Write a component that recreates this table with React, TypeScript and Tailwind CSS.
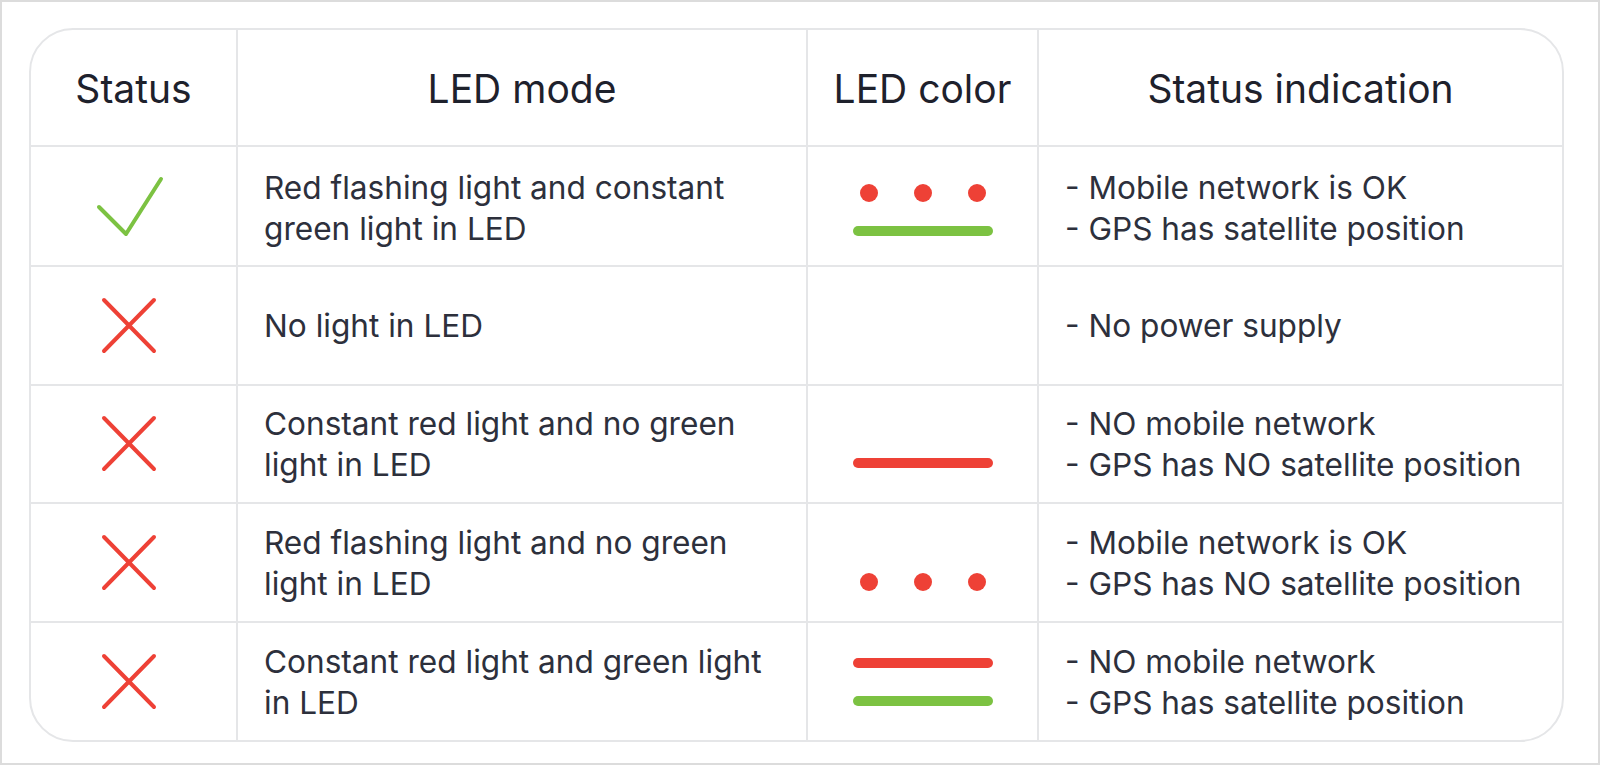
import React from "react";

const RED = "bg-[#ee4136]";
const GREEN = "bg-[#7cc242]";

function Check() {
  return (
    <svg width="80" height="64" viewBox="0 0 80 64" className="ml-[2px]">
      <polyline points="4,33 31,60 66,5" fill="none" stroke="#7cc242" strokeWidth="4" strokeLinecap="round" strokeLinejoin="round" />
    </svg>
  );
}

function Cross() {
  return (
    <svg width="64" height="60" viewBox="0 0 64 60" className="-ml-[3px]">
      <line x1="4" y1="4" x2="54" y2="55" stroke="#ee4136" strokeWidth="4" strokeLinecap="round" />
      <line x1="54" y1="4" x2="4" y2="55" stroke="#ee4136" strokeWidth="4" strokeLinecap="round" />
    </svg>
  );
}

function Dots() {
  return (
    <div className="flex gap-[36px]">
      <span className={`block w-[18px] h-[18px] rounded-full ${RED}`} />
      <span className={`block w-[18px] h-[18px] rounded-full ${RED}`} />
      <span className={`block w-[18px] h-[18px] rounded-full ${RED}`} />
    </div>
  );
}

function Bar({ color }: { color: "red" | "green" }) {
  return <span className={`block w-[140px] h-[10px] rounded-full ${color === "red" ? RED : GREEN}`} />;
}

type Slot = "dots" | "red" | "green" | null;

const rows: { ok: boolean; mode: string[]; top: Slot; bottom: Slot; empty?: boolean; shift?: boolean; status: string[] }[] = [
  { ok: true, mode: ["Red flashing light and constant", "green light in LED"], top: "dots", bottom: "green", shift: true, status: ["- Mobile network is OK", "- GPS has satellite position"] },
  { ok: false, mode: ["No light in LED"], top: null, bottom: null, empty: true, status: ["- No power supply"] },
  { ok: false, mode: ["Constant red light and no green", "light in LED"], top: null, bottom: "red", status: ["- NO mobile network", "- GPS has NO satellite position"] },
  { ok: false, mode: ["Red flashing light and no green", "light in LED"], top: null, bottom: "dots", status: ["- Mobile network is OK", "- GPS has NO satellite position"] },
  { ok: false, mode: ["Constant red light and green light", "in LED"], top: "red", bottom: "green", status: ["- NO mobile network", "- GPS has satellite position"] },
];

function SlotView({ s }: { s: Slot }) {
  return (
    <div className="h-[38px] flex items-center justify-center">
      {s === "dots" ? <Dots /> : s === "red" ? <Bar color="red" /> : s === "green" ? <Bar color="green" /> : null}
    </div>
  );
}

export default function App() {
  const font = { fontFamily: "Inter, 'Noto Sans', sans-serif" };
  const cellB = "border-[#e5e6e8]";
  return (
    <div className="w-[1600px] h-[765px] bg-white border-2 border-[#dcdcdc] pl-[27px] pt-[26px]" style={font}>
      <div className="w-[1535px] h-[714px] border-2 border-[#e5e6e8] rounded-[44px] overflow-hidden grid grid-cols-[207px_570px_231px_1fr] grid-rows-[117px_120px_119px_118px_119px_1fr]">
        {["Status", "LED mode", "LED color", "Status indication"].map((h, i) => (
          <div
            key={h}
            className={`flex items-center justify-center border-b-2 ${i < 3 ? "border-r-2" : ""} ${cellB} text-[39px] text-[#1e212c] pt-[4px]`}
          >
            {h}
          </div>
        ))}
        {rows.map((r, ri) => {
          const last = ri === rows.length - 1;
          const bb = last ? "" : "border-b-2";
          const textPad = ri === 0 ? "pt-[4px]" : "";
          return (
            <React.Fragment key={ri}>
              <div className={`flex items-center justify-center border-r-2 ${bb} ${cellB}`}>
                {r.ok ? <Check /> : <Cross />}
              </div>
              <div className={`flex flex-col justify-center pl-[26px] border-r-2 ${bb} ${cellB} ${textPad} text-[31.6px] leading-[41px] text-[#2d303c]`}>
                {r.mode.map((m) => (
                  <div key={m}>{m}</div>
                ))}
              </div>
              <div className={`flex flex-col items-center justify-center border-r-2 ${bb} ${cellB} ${r.shift ? "pt-[11px]" : ""}`}>
                {r.empty ? null : (
                  <>
                    <SlotView s={r.top} />
                    <SlotView s={r.bottom} />
                  </>
                )}
              </div>
              <div className={`flex flex-col justify-center pl-[26px] ${bb} ${cellB} ${textPad} text-[31.6px] leading-[41px] text-[#2d303c]`}>
                {r.status.map((m) => (
                  <div key={m}>{m}</div>
                ))}
              </div>
            </React.Fragment>
          );
        })}
      </div>
    </div>
  );
}
